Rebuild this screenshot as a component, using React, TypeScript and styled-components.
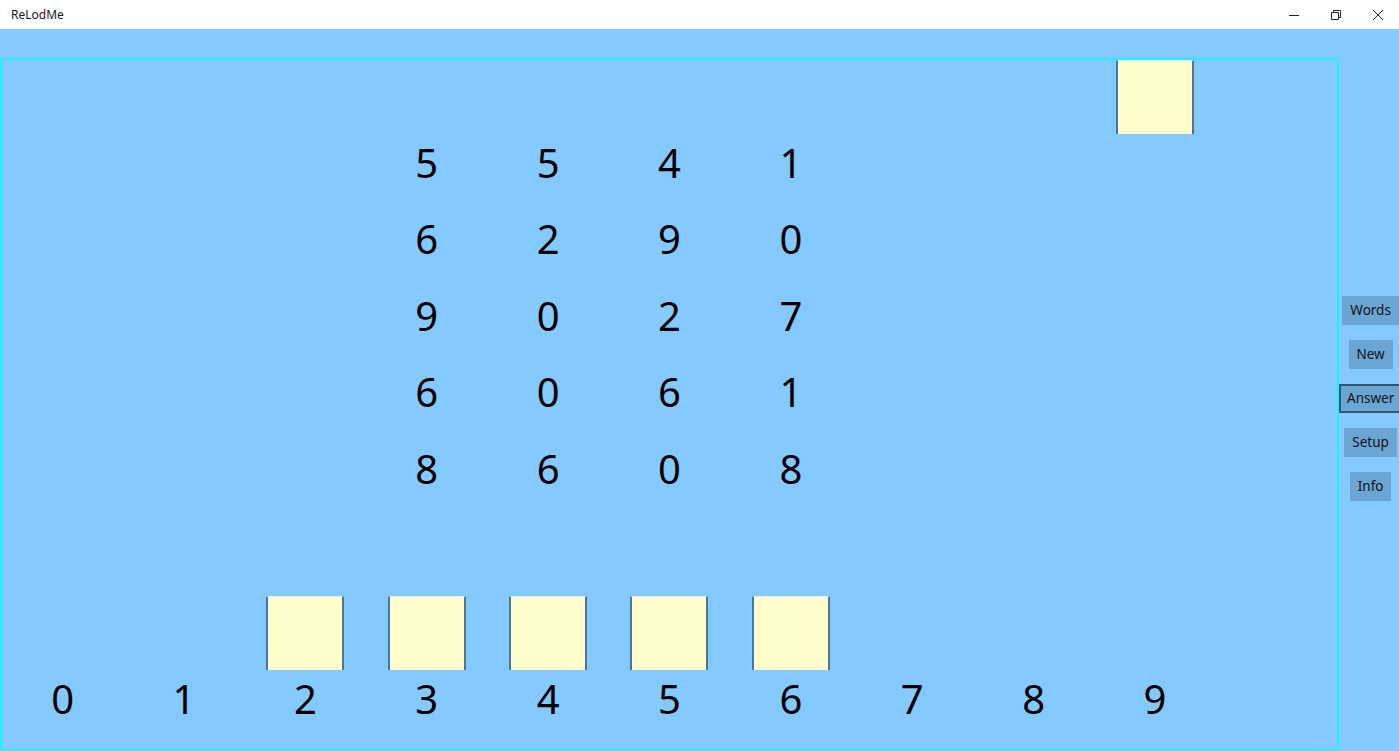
import React from "react";
import styled, { createGlobalStyle } from "styled-components";

const GlobalStyle = createGlobalStyle`
  html, body {
    margin: 0;
    padding: 0;
    overflow: hidden;
  }
  body {
    font-family: "Noto Sans", "Open Sans", "Liberation Sans", sans-serif;
  }
`;

const Window = styled.div`
  width: 1399px;
  height: 751px;
  display: flex;
  flex-direction: column;
  background: #84c9ff;
`;

const TitleBar = styled.div`
  height: 29px;
  flex: none;
  background: #ffffff;
  display: flex;
  align-items: center;
  justify-content: space-between;
`;

const Title = styled.span`
  margin-left: 11px;
  font-size: 12px;
  color: #1a1a1a;
`;

const Controls = styled.div`
  display: flex;
  height: 100%;
`;

const ControlButton = styled.div`
  width: 42px;
  height: 100%;
  display: flex;
  align-items: center;
  justify-content: center;
`;

const Body = styled.div`
  flex: 1;
  display: flex;
  min-height: 0;
`;

const Stage = styled.div`
  padding-top: 29px;
  display: flex;
`;

const Canvas = styled.div`
  box-sizing: border-box;
  width: 1339px;
  height: 693px;
  border: 2px solid #1ff1ff;
  border-radius: 3px;
  display: grid;
  grid-template-columns: repeat(11, 1fr);
  grid-template-rows: repeat(9, 1fr);
`;

const Digit = styled.div<{ $col: number; $row: number }>`
  grid-column: ${(p) => p.$col + 1};
  grid-row: ${(p) => p.$row + 1};
  display: flex;
  align-items: center;
  justify-content: center;
  padding-bottom: 24px;
  font-size: 40px;
  color: #000;
  line-height: 1;
`;

const Slot = styled.div<{ $col: number; $row: number }>`
  grid-column: ${(p) => p.$col + 1};
  grid-row: ${(p) => p.$row + 1};
  display: flex;
  justify-content: center;
  align-items: flex-start;
`;

const Tile = styled.div`
  box-sizing: border-box;
  width: 78px;
  height: 74px;
  background: #fffdcc;
  border-left: 2px solid #4a7798;
  border-right: 2px solid #4a7798;
  border-top: 1px solid #dfeef8;
`;

const Side = styled.div`
  flex: 1;
  display: flex;
  flex-direction: column;
  align-items: center;
  justify-content: center;
  gap: 15px;
  padding-top: 16px;
  padding-right: 1px;
`;

const SideButton = styled.button<{ $focused?: boolean }>`
  box-sizing: border-box;
  height: 29px;
  padding: 0 6px;
  background: #6aa5d4;
  border: 2px solid ${(p) => (p.$focused ? "#2f5673" : "transparent")};
  font-family: "Noto Sans", "Open Sans", sans-serif;
  font-size: 13.5px;
  color: #111;
  cursor: pointer;
`;

const grid = [
  [5, 5, 4, 1],
  [6, 2, 9, 0],
  [9, 0, 2, 7],
  [6, 0, 6, 1],
  [8, 6, 0, 8],
];

const buttons = ["Words", "New", "Answer", "Setup", "Info"];

const App: React.FC = () => {
  return (
    <>
      <GlobalStyle />
      <Window>
        <TitleBar>
          <Title>ReLodMe</Title>
          <Controls>
            <ControlButton>
              <svg width="12" height="12" viewBox="0 0 12 12">
                <path d="M1 6.5h10" stroke="#222" strokeWidth="1" />
              </svg>
            </ControlButton>
            <ControlButton>
              <svg width="12" height="12" viewBox="0 0 12 12">
                <path
                  d="M1.5 3.5h7v7h-7z M3.5 3.5V1.5h7v7h-2"
                  stroke="#222"
                  strokeWidth="1"
                  fill="none"
                />
              </svg>
            </ControlButton>
            <ControlButton>
              <svg width="12" height="12" viewBox="0 0 12 12">
                <path d="M1 1l10 10M11 1L1 11" stroke="#222" strokeWidth="1" />
              </svg>
            </ControlButton>
          </Controls>
        </TitleBar>
        <Body>
          <Stage>
            <Canvas>
              <Slot $col={9} $row={0}>
                <Tile />
              </Slot>
              {grid.map((row, r) =>
                row.map((n, c) => (
                  <Digit key={`g${r}-${c}`} $col={c + 3} $row={r + 1}>
                    {n}
                  </Digit>
                ))
              )}
              {[2, 3, 4, 5, 6].map((c) => (
                <Slot key={`s${c}`} $col={c} $row={7}>
                  <Tile />
                </Slot>
              ))}
              {Array.from({ length: 10 }, (_, i) => (
                <Digit key={`d${i}`} $col={i} $row={8}>
                  {i}
                </Digit>
              ))}
            </Canvas>
          </Stage>
          <Side>
            {buttons.map((b) => (
              <SideButton key={b} $focused={b === "Answer"}>
                {b}
              </SideButton>
            ))}
          </Side>
        </Body>
      </Window>
    </>
  );
};

export default App;
